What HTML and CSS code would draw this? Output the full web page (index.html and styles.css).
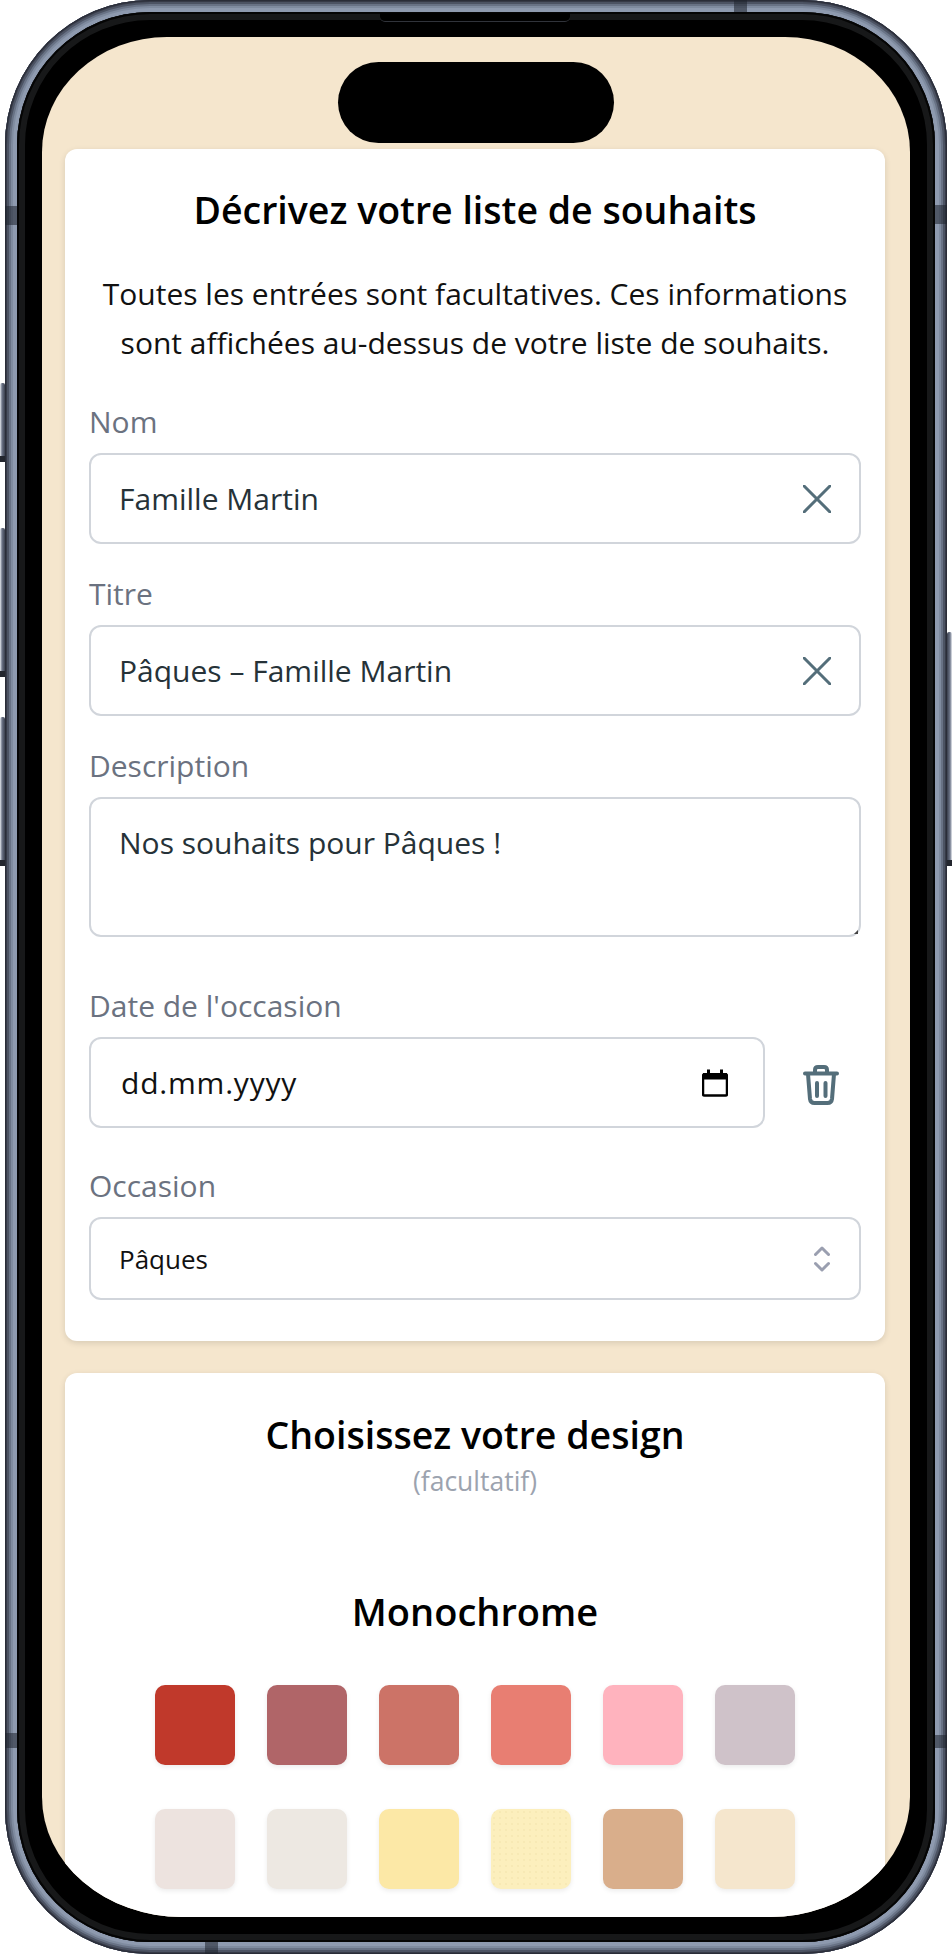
FILE: index.html
```html
<!DOCTYPE html>
<html lang="fr">
<head>
    <meta charset="UTF-8">
    <meta name="viewport" content="width=device-width, initial-scale=1.0">
    <title>Liste de souhaits</title>
    <link rel="stylesheet" href="styles.css">
</head>
<body>

    <div class="phone">
        <!-- Side buttons and antenna bands -->
        <span class="side-btn btn-silent"></span>
        <span class="side-btn btn-up"></span>
        <span class="side-btn btn-down"></span>
        <span class="side-btn btn-power"></span>
        <span class="band band-top"></span>
        <span class="band band-bottom"></span>
        <span class="band band-left-top"></span>
        <span class="band band-left-bottom"></span>
        <span class="band band-right-top"></span>
        <span class="band band-right-bottom"></span>
        <span class="speaker"></span>

        <div class="bezel">
            <div class="screen">
                <div class="island"></div>

                <section class="card card-form">
                    <h2 class="card-title">Décrivez votre liste de souhaits</h2>
                    <p class="card-intro">Toutes les entrées sont facultatives. Ces informations sont affichées au-dessus de votre liste de souhaits.</p>

                    <div class="field field-first">
                        <div class="field-label">Nom</div>
                        <div class="input-box">
                            <span class="input-text">Famille Martin</span>
                            <svg class="icon-clear" viewBox="0 0 28 28"><path d="M1 1 27 27M27 1 1 27"/></svg>
                        </div>
                    </div>

                    <div class="field">
                        <div class="field-label">Titre</div>
                        <div class="input-box">
                            <span class="input-text">Pâques – Famille Martin</span>
                            <svg class="icon-clear" viewBox="0 0 28 28"><path d="M1 1 27 27M27 1 1 27"/></svg>
                        </div>
                    </div>

                    <div class="field">
                        <div class="field-label">Description</div>
                        <div class="input-box textarea-box">
                            <span class="input-text">Nos souhaits pour Pâques !</span>
                            <svg class="resize-grip" viewBox="0 0 4 4"><path d="M4 0V4H0Z"/></svg>
                        </div>
                    </div>

                    <div class="field field-date">
                        <div class="field-label">Date de l'occasion</div>
                        <div class="date-row">
                            <div class="input-box date-box">
                                <span class="input-text date-text">dd.mm.yyyy</span>
                                <svg class="icon-calendar" viewBox="0 0 26 28">
                                    <path class="cal-outline" d="M2.5 5.500H23.500Q25 5.500 25 7V25Q25 26.500 23.500 26.500H2.500Q1 26.500 1 25V7Q1 5.500 2.500 5.500Z"/>
                                    <path class="cal-fill" d="M1 4H5V0.500H8V4H18V0.500H21V4H25V10.500H1Z"/>
                                </svg>
                            </div>
                            <svg class="icon-trash" viewBox="0 0 36 40">
                                <path d="M2 8.500H34M12 8V5Q12 2 15 2H21Q24 2 24 5V8M5 9 7 34Q7.500 38 11.500 38H24.500Q28.500 38 29 34L31 9M14 18V31M22.500 18V31"/>
                            </svg>
                        </div>
                    </div>

                    <div class="field field-occasion">
                        <div class="field-label">Occasion</div>
                        <div class="input-box select-box">
                            <span class="select-text">Pâques</span>
                            <svg class="icon-updown" viewBox="0 0 16 28"><path d="M1.500 9.500 8 3 14.500 9.500M1.500 18.500 8 25 14.500 18.500"/></svg>
                        </div>
                    </div>
                </section>

                <section class="card card-design">
                    <h2 class="card-title">Choisissez votre design</h2>
                    <div class="card-optional">(facultatif)</div>
                    <h3 class="group-title">Monochrome</h3>

                    <div class="swatches">
                        <span class="swatch" style="background-color: #c0392b"></span>
                        <span class="swatch" style="background-color: #b06568"></span>
                        <span class="swatch" style="background-color: #cc7367"></span>
                        <span class="swatch" style="background-color: #e87e72"></span>
                        <span class="swatch" style="background-color: #ffb3be"></span>
                        <span class="swatch" style="background-color: #cfc2c9"></span>
                        <span class="swatch" style="background-color: #ede3df"></span>
                        <span class="swatch" style="background-color: #ede8e2"></span>
                        <span class="swatch" style="background-color: #fce8a6"></span>
                        <span class="swatch swatch-dotted" style="background-color: #fcefbd"></span>
                        <span class="swatch" style="background-color: #d9ae8b"></span>
                        <span class="swatch" style="background-color: #f5e6cd"></span>
                    </div>
                </section>
            </div>
        </div>
    </div>

</body>
</html>
```

FILE: styles.css
```css
/* General page */
html, body {
    margin: 0;
    padding: 0;
    background-color: #fff;
}

body {
    width: 952px;
    height: 1954px;
    overflow: hidden;
    font-family: 'Open Sans', 'Noto Sans', sans-serif;
}

/* Phone body and metal ring */
.phone {
    position: relative;
    box-sizing: border-box;
    width: 942px;
    height: 1954px;
    margin-left: 5px;
    padding: 12px;
    border-radius: 145px;
    background-color: #8e9aaf;
    box-shadow:
        inset 0 0 0 1px #2a2d38,
        inset 0 0 0 2px #363a47,
        inset 0 0 0 4px #4c5363,
        inset 0 0 0 6px #687285,
        inset 0 0 0 8px #7f8b9f;
}

.bezel {
    box-sizing: border-box;
    height: 100%;
    padding: 25px 25px 25px;
    border-radius: 133px;
    background-color: #000;
    box-shadow: inset 0 0 0 2px #050505, inset 0 0 0 8px #171819;
}

.screen {
    position: relative;
    box-sizing: border-box;
    height: 100%;
    padding: 112px 23px 0;
    overflow: hidden;
    border-radius: 125px 125px 140px 140px / 115px 115px 120px 120px;
    background-color: #f5e6cd;
}

/* Camera pill */
.island {
    position: absolute;
    top: 25px;
    left: 296px;
    width: 276px;
    height: 81px;
    border-radius: 41px;
    background-color: #000;
}

.side-btn {
    position: absolute;
    box-sizing: border-box;
    width: 5px;
    border-radius: 2px 2px 0 0;
    border-bottom: 6px solid #23262e;
    background: linear-gradient(to right, #e8ebf0, #6d7588 40%, #3a3f4d);
}

.btn-silent { left: -5px; top: 383px; height: 79px; }
.btn-up { left: -5px; top: 528px; height: 149px; }
.btn-down { left: -5px; top: 717px; height: 149px; }
.btn-power {
    right: -5px;
    top: 632px;
    height: 234px;
    background: linear-gradient(to left, #e8ebf0, #6d7588 40%, #3a3f4d);
}

.band {
    position: absolute;
    background-color: rgba(30, 34, 44, 0.55);
}

.band-top { top: 0; left: 729px; width: 13px; height: 12px; }
.band-bottom { bottom: 0; left: 200px; width: 13px; height: 12px; }
.band-left-top { top: 206px; left: 0; width: 12px; height: 19px; }
.band-left-bottom { top: 1733px; left: 0; width: 12px; height: 15px; }
.band-right-top { top: 205px; right: 0; width: 12px; height: 19px; }
.band-right-bottom { top: 1735px; right: 0; width: 12px; height: 13px; }

.speaker {
    position: absolute;
    z-index: 1;
    top: 13px;
    left: 375px;
    width: 190px;
    height: 8px;
    border-bottom: 1px solid #30333a;
    border-radius: 0 0 5px 5px;
    background-color: #000;
}

/* Cards */
.card {
    box-sizing: border-box;
    width: 820px;
    border-radius: 12px;
    background-color: #fff;
    box-shadow: 0 2px 6px rgba(0, 0, 0, 0.12);
}

.card-form {
    padding: 36px 24px 41px;
}

.card-design {
    height: 640px;
    margin-top: 32px;
    padding: 37px 24px 0;
}

.card-title {
    margin: 0;
    font-size: 37.5px;
    line-height: 50px;
    font-weight: 600;
    text-align: center;
    color: #000;
}

.card-intro {
    margin: 35px 0 0;
    font-size: 30px;
    line-height: 48.5px;
    text-align: center;
    color: #111;
}

/* Form fields */
.field {
    margin-top: 29px;
}

.field-first {
    margin-top: 34px;
}

.field-label {
    margin-bottom: 10px;
    font-size: 30px;
    line-height: 42px;
    color: #6b7280;
}

.input-box {
    position: relative;
    box-sizing: border-box;
    display: flex;
    align-items: center;
    justify-content: space-between;
    height: 91px;
    padding: 0 28px 0 28px;
    border: 2px solid #d1d5db;
    border-radius: 12px;
    background-color: #fff;
}

.input-text {
    font-size: 30px;
    color: #263238;
}

.textarea-box {
    align-items: flex-start;
    height: 140px;
    padding-top: 23px;
}

.resize-grip {
    position: absolute;
    right: 1px;
    bottom: 1px;
    width: 4px;
    height: 4px;
    fill: #444;
}

.field-date {
    margin-top: 48px;
}

.date-row {
    display: flex;
    align-items: center;
    justify-content: space-between;
    padding-right: 22px;
}

.date-box {
    width: 676px;
    padding-right: 35px;
    padding-left: 30px;
}

.date-text {
    letter-spacing: 0.8px;
    color: #111;
}

.field-occasion {
    margin-top: 37px;
}

.select-box {
    height: 83px;
}

.select-text {
    font-size: 26px;
    color: #111;
}

/* Icons */
.icon-clear {
    width: 28px;
    height: 28px;
    fill: none;
    stroke: #546e7a;
    stroke-width: 3;
    stroke-linecap: round;
}

.icon-calendar {
    width: 26px;
    height: 28px;
}

.cal-outline {
    fill: #fff;
    stroke: #000;
    stroke-width: 2.500;
}

.cal-fill {
    fill: #000;
}

.icon-trash {
    width: 36px;
    height: 40px;
    margin-top: 5px;
    fill: none;
    stroke: #546e7a;
    stroke-width: 4;
    stroke-linecap: round;
    stroke-linejoin: round;
}

.icon-updown {
    width: 16px;
    height: 28px;
    margin-right: 1px;
    fill: none;
    stroke: #9a9fb0;
    stroke-width: 3;
    stroke-linecap: round;
    stroke-linejoin: round;
}

/* Design card */
.card-optional {
    margin-top: 5px;
    font-size: 26.5px;
    line-height: 32px;
    text-align: center;
    color: #9ca3af;
}

.group-title {
    margin: 89px 0 0;
    font-size: 38px;
    line-height: 50px;
    font-weight: 600;
    text-align: center;
    color: #000;
}

.swatches {
    display: grid;
    grid-template-columns: repeat(6, 80px);
    justify-content: center;
    gap: 44px 32px;
    margin-top: 49px;
}

.swatch {
    height: 80px;
    border-radius: 10px;
    box-shadow: 0 2px 5px rgba(0, 0, 0, 0.08);
}

.swatch-dotted {
    background-image: radial-gradient(rgba(215, 190, 120, 0.12) 1px, transparent 1px);
    background-size: 6px 6px;
}
```
